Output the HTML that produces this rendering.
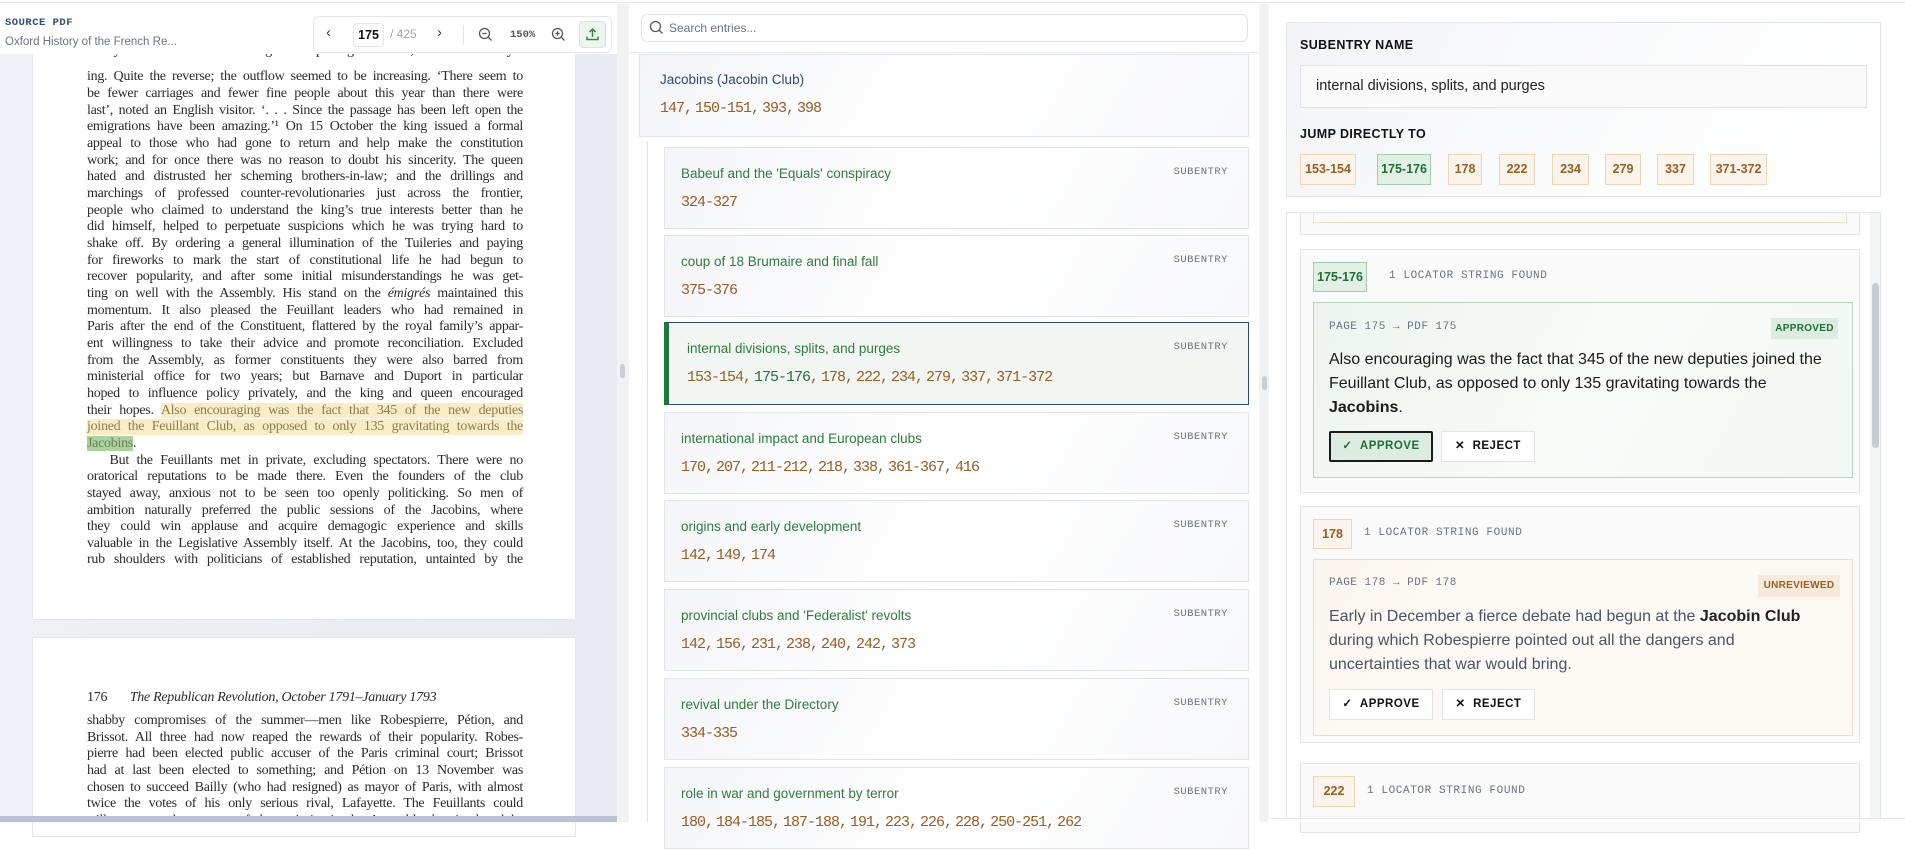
<!DOCTYPE html>
<html><head><meta charset="utf-8">
<style>
*{box-sizing:border-box;margin:0;padding:0}
body{width:1905px;height:822px;overflow:hidden;background:#fff;font-family:"Liberation Sans",sans-serif;position:relative}
.a{position:absolute}
.mono{font-family:"Liberation Mono","DejaVu Sans Mono",monospace}
.ser{font-family:"Liberation Serif",serif}
.pl{position:absolute;left:87px;width:436px;font-size:14px;letter-spacing:-0.28px;white-space:nowrap;text-align:justify;text-align-last:justify;color:#2b2b2b;line-height:16px;height:16px}
.pl.l{text-align-last:left}
.hl{background:rgba(248,228,170,.7);color:#8c7c5a}
.hg{background:#a9d3a0;color:#6f7f58}
.card{position:absolute;left:664px;width:585px;height:82px;border:1px solid #e1e4e9;background:linear-gradient(120deg,#f4f5f8,#fff 50%,#f7f8fa)}
.card .t{position:absolute;left:16px;top:18px;font-size:13.5px;color:#2f7d3c}
.card .n,.num{position:absolute;left:16px;top:46px;font-size:15px;color:#9a5d22;letter-spacing:-1px;word-spacing:-5px;font-family:"Liberation Mono",monospace}
.card .s{position:absolute;right:20px;top:18px;font-size:10.5px;color:#6b7280;letter-spacing:.5px;font-family:"Liberation Mono",monospace}
.chip{position:absolute;top:154px;height:31px;border:1px solid #efd5b5;background:#fbf4ec;color:#9a5d22;font-size:12.5px;font-weight:bold;text-align:center;line-height:29px}
.chip.g{border-color:#9fcfaa;background:#e1efe4;color:#1f6f37}
.btn{position:absolute;height:31px;border:1px solid #e1e4e9;background:#fff;font-size:11.5px;font-weight:bold;letter-spacing:.5px;line-height:29px;text-align:center;color:#111}
.rt{position:absolute;left:1329px;width:530px;font-size:16px;line-height:24px;white-space:nowrap}
</style></head><body>
<div class="a" style="left:0;top:0;width:1905px;height:3px;border-bottom:1px solid #e5e7eb"></div>

<!-- LEFT PANEL -->
<div class="a" style="left:0;top:54px;width:617px;height:768px;background:linear-gradient(90deg,#eef0f5,#e8ebf2)"></div>
<div class="a" style="left:617px;top:4px;width:12px;height:818px;background:#f1f2f4"></div>
<div class="a" style="left:620px;top:364px;width:5px;height:14px;border-radius:3px;background:#c9ced8"></div>
<div class="a" style="left:32px;top:54px;width:544px;height:566px;background:#fff;border:1px solid #e3e6ec;border-top:none"></div>
<div class="a" style="left:32px;top:637px;width:544px;height:200px;background:#fff;border:1px solid #e3e6ec"></div>

<div class="a ser" style="left:0;top:0;width:617px;height:822px;overflow:hidden">
<div class="pl" style="top:43px">nearly the same number of emigrants departing as before, and it was not yet</div>
<div class="pl" style="top:69px">ing. Quite the reverse; the outflow seemed to be increasing. ‘There seem to</div>
<div class="pl" style="top:86px">be fewer carriages and fewer fine people about this year than there were</div>
<div class="pl" style="top:103px">last’, noted an English visitor. ‘. . . Since the passage has been left open the</div>
<div class="pl" style="top:119px">emigrations have been amazing.’¹ On 15 October the king issued a formal</div>
<div class="pl" style="top:136px">appeal to those who had gone to return and help make the constitution</div>
<div class="pl" style="top:153px">work; and for once there was no reason to doubt his sincerity. The queen</div>
<div class="pl" style="top:169px">hated and distrusted her scheming brothers-in-law; and the drillings and</div>
<div class="pl" style="top:186px">marchings of professed counter-revolutionaries just across the frontier,</div>
<div class="pl" style="top:203px">people who claimed to understand the king’s true interests better than he</div>
<div class="pl" style="top:219px">did himself, helped to perpetuate suspicions which he was trying hard to</div>
<div class="pl" style="top:236px">shake off. By ordering a general illumination of the Tuileries and paying</div>
<div class="pl" style="top:253px">for fireworks to mark the start of constitutional life he had begun to</div>
<div class="pl" style="top:269px">recover popularity, and after some initial misunderstandings he was get-</div>
<div class="pl" style="top:286px">ting on well with the Assembly. His stand on the <i>émigrés</i> maintained this</div>
<div class="pl" style="top:303px">momentum. It also pleased the Feuillant leaders who had remained in</div>
<div class="pl" style="top:319px">Paris after the end of the Constituent, flattered by the royal family’s appar-</div>
<div class="pl" style="top:336px">ent willingness to take their advice and promote reconciliation. Excluded</div>
<div class="pl" style="top:353px">from the Assembly, as former constituents they were also barred from</div>
<div class="pl" style="top:369px">ministerial office for two years; but Barnave and Duport in particular</div>
<div class="pl" style="top:386px">hoped to influence policy privately, and the king and queen encouraged</div>
<div class="pl" style="top:403px">their hopes. <span class="hl">Also encouraging was the fact that 345 of the new deputies</span></div>
<div class="pl hl" style="top:419px">joined the Feuillant Club, as opposed to only 135 gravitating towards the</div>
<div class="pl l" style="top:436px"><span class="hg">Jacobins</span>.</div>
<div class="pl" style="top:453px">&nbsp;&nbsp;&nbsp;But the Feuillants met in private, excluding spectators. There were no</div>
<div class="pl" style="top:469px">oratorical reputations to be made there. Even the founders of the club</div>
<div class="pl" style="top:486px">stayed away, anxious not to be seen too openly politicking. So men of</div>
<div class="pl" style="top:503px">ambition naturally preferred the public sessions of the Jacobins, where</div>
<div class="pl" style="top:519px">they could win applause and acquire demagogic experience and skills</div>
<div class="pl" style="top:536px">valuable in the Legislative Assembly itself. At the Jacobins, too, they could</div>
<div class="pl" style="top:552px">rub shoulders with politicians of established reputation, untainted by the</div>

<div class="pl l" style="top:690px">176&nbsp;&nbsp;&nbsp;&nbsp;&nbsp;&nbsp;&nbsp;<i>The Republican Revolution, October 1791–January 1793</i></div>
<div class="pl" style="top:713px">shabby compromises of the summer—men like Robespierre, Pétion, and</div>
<div class="pl" style="top:730px">Brissot. All three had now reaped the rewards of their popularity. Robes-</div>
<div class="pl" style="top:746px">pierre had been elected public accuser of the Paris criminal court; Brissot</div>
<div class="pl" style="top:763px">had at last been elected to something; and Pétion on 13 November was</div>
<div class="pl" style="top:780px">chosen to succeed Bailly (who had resigned) as mayor of Paris, with almost</div>
<div class="pl" style="top:796px">twice the votes of his only serious rival, Lafayette. The Feuillants could</div>
<div class="pl" style="top:813px">still count on the support of the majority in the Assembly, but in the clubs</div>
</div>
<div class="a" style="left:0;top:816px;width:617px;height:6px;background:#b8c3d6"></div>

<!-- left header -->
<div class="a" style="left:0;top:4px;width:617px;height:50px;background:#fff"></div>
<div class="a mono" style="left:5px;top:17px;font-size:10.5px;font-weight:bold;color:#2d4c7e;letter-spacing:.5px">SOURCE PDF</div>
<div class="a" style="left:5px;top:36px;font-size:11.5px;color:#6b7280">Oxford History of the French Re...</div>
<div class="a" style="left:313px;top:16px;width:299px;height:37px;border:1px solid #e3e6ea;border-radius:6px;background:#fff"></div>
<div class="a" style="left:326px;top:24px;font-size:15px;color:#444">‹</div>
<div class="a" style="left:353px;top:23px;width:31px;height:24px;border:1px solid #e3e6ea;border-radius:4px;font-size:12.5px;font-weight:bold;text-align:center;line-height:22px;color:#111">175</div>
<div class="a" style="left:390px;top:27px;font-size:12px;color:#9ca3af">/ 425</div>
<div class="a" style="left:437px;top:24px;font-size:15px;color:#444">›</div>
<div class="a" style="left:463px;top:25px;width:1px;height:20px;background:#e1e4e8"></div>
<svg class="a" style="left:478px;top:27px" width="15" height="15" viewBox="0 0 15 15" fill="none" stroke="#555" stroke-width="1.3"><circle cx="6.5" cy="6.5" r="5"/><path d="M4.3 6.5h4.4M10.2 10.2l3.3 3.3"/></svg>
<div class="a mono" style="left:510px;top:29px;font-size:10.5px;font-weight:bold;color:#555">150%</div>
<svg class="a" style="left:551px;top:27px" width="15" height="15" viewBox="0 0 15 15" fill="none" stroke="#555" stroke-width="1.3"><circle cx="6.5" cy="6.5" r="5"/><path d="M4.3 6.5h4.4M6.5 4.3v4.4M10.2 10.2l3.3 3.3"/></svg>
<div class="a" style="left:579px;top:21px;width:27px;height:27px;border:1px solid #d7e6da;border-radius:4px;background:#edf5ef"></div>
<svg class="a" style="left:585px;top:27px" width="15" height="15" viewBox="0 0 15 15" fill="none" stroke="#2f8a44" stroke-width="1.5"><path d="M7.5 10V2M4.5 5l3-3 3 3M2 9.5v3h11v-3"/></svg>

<!-- MIDDLE PANEL -->
<div class="a" style="left:641px;top:14px;width:607px;height:28px;border:1px solid #dfe3e8;border-radius:6px;background:#fff"></div>
<svg class="a" style="left:649px;top:20px" width="15" height="15" viewBox="0 0 15 15" fill="none" stroke="#555" stroke-width="1.3"><circle cx="6.5" cy="6.5" r="5"/><path d="M10.2 10.2l3.3 3.3"/></svg>
<div class="a" style="left:669px;top:21px;font-size:12px;color:#6b7280">Search entries...</div>
<div class="a" style="left:629px;top:52px;width:630px;height:1px;background:#e5e7eb"></div>
<div class="a" style="left:1259px;top:4px;width:10px;height:818px;background:#f1f2f4;border-radius:4px"></div>
<div class="a" style="left:1262px;top:376px;width:5px;height:14px;border-radius:3px;background:#c9ced8"></div>

<div class="a" style="left:639px;top:54px;width:610px;height:83px;border:1px solid #e1e4e9;background:linear-gradient(120deg,#f4f5f8,#fff 50%,#f7f8fa)"></div>
<div class="a" style="left:660px;top:72px;font-size:13.5px;color:#2b4a7c">Jacobins (Jacobin Club)</div>
<div class="num" style="left:660px;top:100px">147, 150-151, 393, 398</div>
<div class="a" style="left:647px;top:141px;width:1px;height:681px;background:#e1e4e9"></div>

<div class="card" style="top:147px"><div class="t">Babeuf and the 'Equals' conspiracy</div><div class="s">SUBENTRY</div><div class="n">324-327</div></div>
<div class="card" style="top:235px"><div class="t">coup of 18 Brumaire and final fall</div><div class="s">SUBENTRY</div><div class="n">375-376</div></div>
<div class="card" style="top:322px;height:83px;background:#f1f6f2;border:1px solid #2b4a74;border-left:5px solid #1e7a3a"><div class="t" style="left:18px">internal divisions, splits, and purges</div><div class="s">SUBENTRY</div><div class="n" style="left:18px">153-154, <span style="color:#1f6f37">175-176</span>, 178, 222, 234, 279, 337, 371-372</div></div>
<div class="card" style="top:412px"><div class="t">international impact and European clubs</div><div class="s">SUBENTRY</div><div class="n">170, 207, 211-212, 218, 338, 361-367, 416</div></div>
<div class="card" style="top:500px"><div class="t">origins and early development</div><div class="s">SUBENTRY</div><div class="n">142, 149, 174</div></div>
<div class="card" style="top:589px"><div class="t">provincial clubs and 'Federalist' revolts</div><div class="s">SUBENTRY</div><div class="n">142, 156, 231, 238, 240, 242, 373</div></div>
<div class="card" style="top:678px"><div class="t">revival under the Directory</div><div class="s">SUBENTRY</div><div class="n">334-335</div></div>
<div class="card" style="top:767px"><div class="t">role in war and government by terror</div><div class="s">SUBENTRY</div><div class="n">180, 184-185, 187-188, 191, 223, 226, 228, 250-251, 262</div></div>

<!-- RIGHT PANEL -->
<div class="a" style="left:1286px;top:22px;width:595px;height:175px;border:1px solid #e1e4e9;background:linear-gradient(120deg,#f3f4f7,#fafbfc 50%,#fff)"></div>
<div class="a" style="left:1300px;top:38px;font-size:12.5px;font-weight:bold;color:#111;letter-spacing:.4px">SUBENTRY NAME</div>
<div class="a" style="left:1300px;top:65px;width:567px;height:43px;border:1px solid #e1e4e9;background:#fafafa"></div>
<div class="a" style="left:1316px;top:78px;font-size:14.5px;color:#222">internal divisions, splits, and purges</div>
<div class="a" style="left:1300px;top:127px;font-size:12.5px;font-weight:bold;color:#111;letter-spacing:.4px">JUMP DIRECTLY TO</div>
<div class="chip" style="left:1300px;width:56px">153-154</div>
<div class="chip g" style="left:1377px;width:54px">175-176</div>
<div class="chip" style="left:1448px;width:34px">178</div>
<div class="chip" style="left:1499px;width:36px">222</div>
<div class="chip" style="left:1552px;width:37px">234</div>
<div class="chip" style="left:1605px;width:36px">279</div>
<div class="chip" style="left:1657px;width:37px">337</div>
<div class="chip" style="left:1710px;width:57px">371-372</div>

<div class="a" style="left:1286px;top:212px;width:595px;height:610px;border:1px solid #e1e4e9;border-bottom:none;background:#fff;overflow:hidden">
  <div class="a" style="left:13px;top:-10px;width:560px;height:32px;border:1px solid #e1e4e9;background:#fafafa"></div>
  <div class="a" style="left:26px;top:-10px;width:534px;height:20px;border:1px solid #f1dcc2;border-top:none"></div>
  <div class="a" style="right:0;top:0;width:10px;height:610px;background:#f4f5f7"></div>
  <div class="a" style="right:1px;top:70px;width:7px;height:165px;border-radius:4px;background:#c6ccd8"></div>
</div>

<!-- card 175-176 -->
<div class="a" style="left:1300px;top:249px;width:560px;height:244px;border:1px solid #e1e4e9;background:#fafafa"></div>
<div class="a" style="left:1313px;top:262px;width:54px;height:30px;border:1px solid #9fcfaa;background:#e1efe4;color:#1f6f37;font-size:12.5px;font-weight:bold;text-align:center;line-height:28px">175-176</div>
<div class="a mono" style="left:1389px;top:270px;font-size:11px;color:#6b7280;letter-spacing:.6px">1 LOCATOR STRING FOUND</div>
<div class="a" style="left:1313px;top:302px;width:540px;height:176px;border:1px solid #b5d8bd;background:linear-gradient(120deg,#edf4ee,#f8fbf8 50%,#f3f8f4)"></div>
<div class="a mono" style="left:1329px;top:321px;font-size:11px;color:#6b7280;letter-spacing:.5px">PAGE 175 → PDF 175</div>
<div class="a" style="left:1771px;top:318px;width:67px;height:21px;background:#dcece0;color:#1f6f37;font-size:10px;font-weight:bold;text-align:center;line-height:21px;letter-spacing:.3px">APPROVED</div>
<div class="rt" style="top:348px;color:#1a1a1a">Also encouraging was the fact that 345 of the new deputies joined the<br>Feuillant Club, as opposed to only 135 gravitating towards the<br><b>Jacobins</b>.</div>
<div class="btn" style="left:1329px;top:431px;width:104px;background:#dcece0;border:2px solid #1a1a1a;border-radius:2px;color:#1f6f37;line-height:27px">✓&nbsp;&nbsp;APPROVE</div>
<div class="btn" style="left:1441px;top:431px;width:94px">✕&nbsp;&nbsp;REJECT</div>

<!-- card 178 -->
<div class="a" style="left:1300px;top:506px;width:560px;height:237px;border:1px solid #e1e4e9;background:#fafafa"></div>
<div class="a" style="left:1313px;top:519px;width:39px;height:30px;border:1px solid #efd5b5;background:#fbf4ec;color:#9a5d22;font-size:12.5px;font-weight:bold;text-align:center;line-height:28px">178</div>
<div class="a mono" style="left:1364px;top:527px;font-size:11px;color:#6b7280;letter-spacing:.6px">1 LOCATOR STRING FOUND</div>
<div class="a" style="left:1313px;top:559px;width:540px;height:177px;border:1px solid #f1dcc2;background:linear-gradient(120deg,#fbf6f0,#fdfaf6 50%,#fcf8f3)"></div>
<div class="a mono" style="left:1329px;top:577px;font-size:11px;color:#6b7280;letter-spacing:.5px">PAGE 178 → PDF 178</div>
<div class="a" style="left:1758px;top:575px;width:82px;height:22px;background:#f8eadb;color:#9a5d22;font-size:10px;font-weight:bold;text-align:center;line-height:22px;letter-spacing:.3px">UNREVIEWED</div>
<div class="rt" style="top:605px;color:#4b5563">Early in December a fierce debate had begun at the <b style="color:#222">Jacobin Club</b><br>during which Robespierre pointed out all the dangers and<br>uncertainties that war would bring.</div>
<div class="btn" style="left:1329px;top:689px;width:104px">✓&nbsp;&nbsp;APPROVE</div>
<div class="btn" style="left:1442px;top:689px;width:93px">✕&nbsp;&nbsp;REJECT</div>

<!-- card 222 -->
<div class="a" style="left:1300px;top:763px;width:560px;height:70px;border:1px solid #e1e4e9;background:#fafafa"></div>
<div class="a" style="left:1313px;top:776px;width:42px;height:31px;border:1px solid #efd5b5;background:#fbf4ec;color:#9a5d22;font-size:12.5px;font-weight:bold;text-align:center;line-height:29px">222</div>
<div class="a mono" style="left:1367px;top:785px;font-size:11px;color:#6b7280;letter-spacing:.6px">1 LOCATOR STRING FOUND</div>
<div class="a" style="left:1270px;top:818px;width:635px;height:4px;background:#fff;border-top:1px solid #e5e7eb"></div>
</body></html>
